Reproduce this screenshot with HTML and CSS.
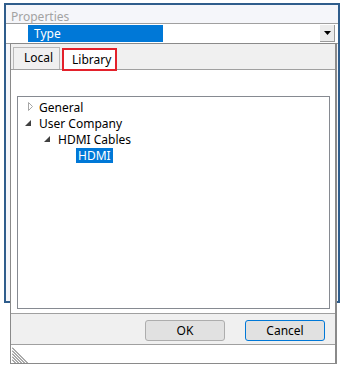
FILE: index.html
```html
<!DOCTYPE html>
<html lang="en">
<head>
  <meta charset="UTF-8">
  <title>Properties - Type</title>
  <link rel="stylesheet" href="styles.css">
</head>
<body>

  <!-- Properties panel behind the popup -->
  <div class="panel">
    <div class="panel-title">Properties</div>
    <div class="combo">
      <div class="combo-value">Type</div>
      <div class="combo-btn">
        <svg width="7" height="4" viewBox="0 0 7 4"><polygon points="0,0 7,0 3.5,4" fill="#000"/></svg>
      </div>
    </div>
  </div>

  <!-- Dropdown editor -->
  <div class="popup">
    <div class="tabs">
      <div class="tab">Local</div>
      <div class="tab active">Library</div>
    </div>

    <div class="page">
      <div class="tree">
        <div class="node lvl0">
          <svg class="twisty" width="16" height="16" viewBox="0 0 16 16"><polygon points="5.5,3.5 9.5,7.5 5.5,11.5" fill="none" stroke="#a6a6a6"/></svg>
          <span>General</span>
        </div>
        <div class="node lvl0">
          <svg class="twisty" width="16" height="16" viewBox="0 0 16 16"><polygon points="8,5 8,11 2,11" fill="#404040"/></svg>
          <span>User Company</span>
        </div>
        <div class="node lvl1">
          <svg class="twisty" width="16" height="16" viewBox="0 0 16 16"><polygon points="8,5 8,11 2,11" fill="#404040"/></svg>
          <span>HDMI Cables</span>
        </div>
        <div class="node lvl2">
          <span class="selected">HDMI</span>
        </div>
      </div>
    </div>

    <div class="buttons">
      <button class="btn">OK</button>
      <button class="btn default">Cancel</button>
    </div>

    <div class="status">
      <svg class="grip" width="16" height="16" viewBox="0 0 16 16">
        <g stroke="#555" stroke-width="1">
          <line x1="0" y1="0.5" x2="15.5" y2="16"/>
          <line x1="0" y1="3.5" x2="12.5" y2="16"/>
          <line x1="0" y1="6.5" x2="9.5" y2="16"/>
          <line x1="0" y1="9.5" x2="6.5" y2="16"/>
          <line x1="0" y1="12.5" x2="3.5" y2="16"/>
        </g>
      </svg>
    </div>
  </div>

</body>
</html>
```

FILE: styles.css
```css
* {
  box-sizing: border-box;
}

body {
  margin: 0;
  width: 344px;
  height: 368px;
  background: #fff;
  font-family: "Noto Sans", "Open Sans", sans-serif;
  font-size: 12px;
  position: relative;
  overflow: hidden;
}

.panel {
  margin: 3px 4px 0 4px;
  width: 336px;
  height: 300px;
  border: 2px solid #2f5d8c;
  background: #f5f6fa;
}

.panel-title {
  height: 18px;
  padding: 6px 0 0 5px;
  color: #a3a3a3;
  line-height: 12px;
}

.combo {
  display: flex;
  align-items: center;
  height: 21px;
  background: #fff;
  border-top: 1px solid #a0a0a0;
  border-bottom: 1px solid #a0a0a0;
}

.combo-value {
  margin-left: 22px;
  width: 135px;
  height: 17px;
  padding-left: 6px;
  background: #0078d7;
  color: #fff;
  line-height: 17px;
}

.combo-btn {
  margin-left: auto;
  margin-right: 3px;
  width: 15px;
  height: 17px;
  display: flex;
  align-items: center;
  justify-content: center;
  background: #ececec;
  border-right: 1px solid #9a9a9a;
  border-bottom: 1px solid #9a9a9a;
}

.popup {
  position: absolute;
  left: 10px;
  top: 43px;
  width: 327px;
  height: 321px;
  background: #f0f0f0;
  border: 1px solid #8a8a8a;
  border-right: 2px solid #8a8a8a;
  display: flex;
  flex-direction: column;
}

.tabs {
  display: flex;
  align-items: flex-end;
  height: 25px;
  padding-left: 2px;
  gap: 2px;
  position: relative;
  z-index: 1;
}

.tab {
  width: 47px;
  height: 22px;
  padding-left: 10px;
  line-height: 20px;
  background: #f0f0f0;
  border: 1px solid #b9b9b9;
  border-bottom: none;
}

.tab.active {
  width: 55px;
  height: 23px;
  margin-bottom: -2px;
  padding-left: 8px;
  background: #fff;
  border: 2px solid #e3212b;
  line-height: 20px;
}

.page {
  height: 245px;
  background: #fff;
  border-top: 1px solid #a0a0a0;
  border-bottom: 1px solid #a0a0a0;
  padding: 26px 6px 0 6px;
}

.tree {
  width: 313px;
  height: 213px;
  border: 1px solid #868a91;
  padding-top: 2px;
}

.node {
  display: flex;
  align-items: center;
  height: 16px;
  color: #000;
  white-space: nowrap;
}

.node.lvl0 {
  padding-left: 5px;
}

.node.lvl1 {
  padding-left: 24px;
}

.node.lvl2 {
  padding-left: 58px;
}

.twisty {
  flex: none;
}

.selected {
  background: #0078d7;
  color: #fff;
  padding: 0 2px;
  line-height: 15px;
}

.buttons {
  display: flex;
  justify-content: flex-end;
  gap: 20px;
  height: 31px;
  padding: 6px 10px 0 0;
  border-bottom: 1px solid #a0a0a0;
}

.btn {
  width: 80px;
  height: 21px;
  font-family: inherit;
  font-size: 12px;
  color: #000;
  background: #e1e1e1;
  border: 1px solid #adadad;
  border-radius: 3px;
  padding: 0;
}

.btn.default {
  border-color: #0078d7;
}

.status {
  flex: 1;
  background: #fff;
  display: flex;
  align-items: flex-end;
  padding-left: 1px;
}

.grip {
  display: block;
}
```
